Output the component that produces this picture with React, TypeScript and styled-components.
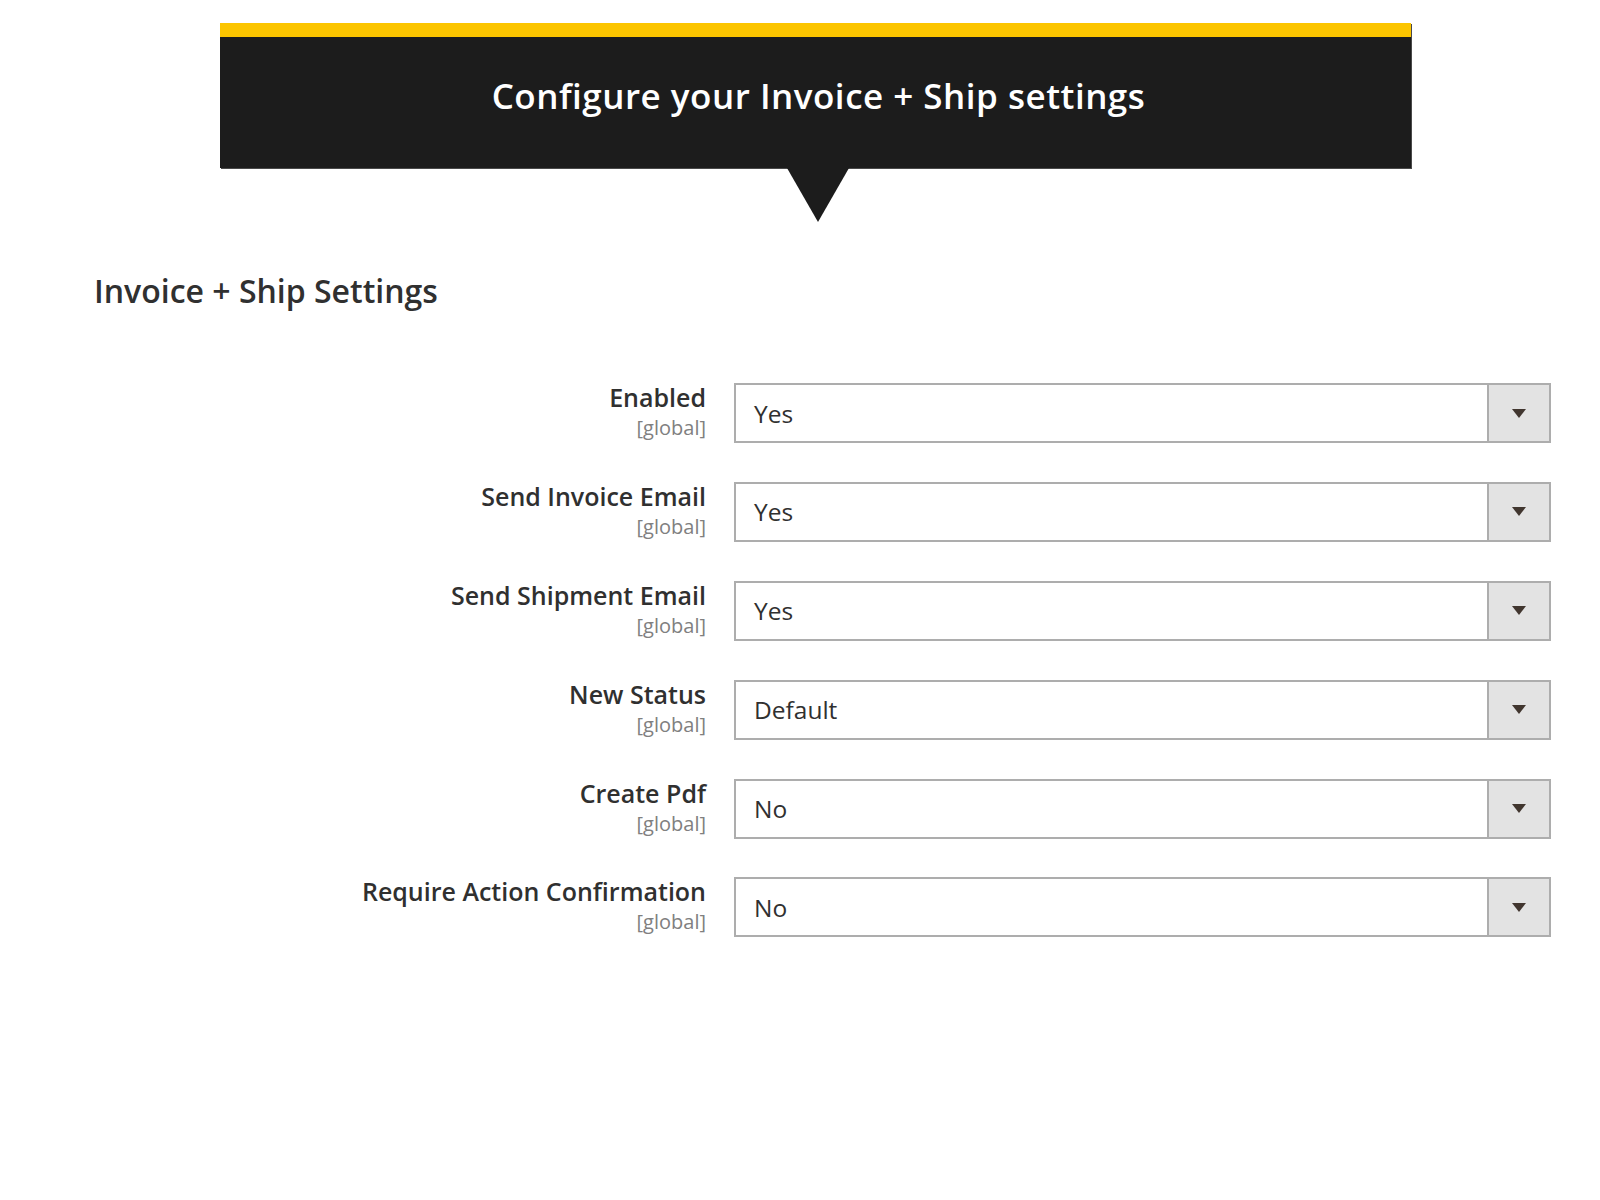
import React from "react";
import styled, { createGlobalStyle } from "styled-components";

const GlobalStyle = createGlobalStyle`
  html, body { margin: 0; padding: 0; background: #ffffff; }
  body { font-family: "Open Sans", "Liberation Sans", sans-serif; color: #303030; }
`;

const Page = styled.div`
  width: 1600px;
  min-height: 1200px;
  padding-top: 23px;
  box-sizing: border-box;
`;

const Banner = styled.div`
  position: relative;
  margin-left: 220px;
  width: 1191px;
  height: 131px;
  box-sizing: content-box;
  border-top: 14px solid #fcc500;
  background: #1c1c1c;
  box-shadow: 1px 1px 0 #4a4a4a;
  display: flex;
  align-items: center;
  justify-content: center;
  &::after {
    content: "";
    position: absolute;
    left: 567px;
    top: 131px;
    width: 0;
    height: 0;
    border-left: 31px solid transparent;
    border-right: 31px solid transparent;
    border-top: 54px solid #1c1c1c;
  }
`;

const BannerTitle = styled.h1`
  margin: 0 0 14px 6px;
  font-family: "Open Sans", "Liberation Sans", sans-serif;
  font-weight: 600;
  font-size: 35px;
  letter-spacing: 0.5px;
  color: #ffffff;
`;

const Heading = styled.h2`
  margin: 104px 0 0 94px;
  font-size: 32px;
  line-height: 38px;
  font-weight: 600;
  color: #303030;
`;

const Form = styled.div`
  margin-top: 73px;
  display: grid;
  grid-template-columns: 706px 817px;
  column-gap: 28px;
  row-gap: 38.9px;
`;

const LabelCell = styled.div`
  display: flex;
  flex-direction: column;
  align-items: flex-end;
  text-align: right;
`;

const LabelText = styled.span`
  font-size: 25px;
  line-height: 29px;
  font-weight: 600;
  color: #303030;
`;

const Scope = styled.span`
  margin-top: 3px;
  font-size: 20px;
  line-height: 26px;
  font-weight: 400;
  color: #808080;
`;

const Select = styled.div`
  height: 60px;
  box-sizing: border-box;
  border: 2px solid #adadad;
  background: #ffffff;
  display: flex;
  align-items: stretch;
`;

const SelectValue = styled.div`
  flex: 1;
  display: flex;
  align-items: center;
  padding-left: 18px;
  font-size: 24.5px;
  color: #303030;
`;

const SelectButton = styled.div`
  width: 60px;
  border-left: 2px solid #adadad;
  background: #e3e3e3;
  display: flex;
  align-items: center;
  justify-content: center;
  &::before {
    content: "";
    width: 0;
    height: 0;
    border-left: 7px solid transparent;
    border-right: 7px solid transparent;
    border-top: 9px solid #41362f;
  }
`;

const rows = [
  { label: "Enabled", value: "Yes" },
  { label: "Send Invoice Email", value: "Yes" },
  { label: "Send Shipment Email", value: "Yes" },
  { label: "New Status", value: "Default" },
  { label: "Create Pdf", value: "No" },
  { label: "Require Action Confirmation", value: "No" },
];

export default function App() {
  return (
    <Page>
      <GlobalStyle />
      <Banner>
        <BannerTitle>Configure your Invoice + Ship settings</BannerTitle>
      </Banner>
      <Heading>Invoice + Ship Settings</Heading>
      <Form>
        {rows.map((r) => (
          <React.Fragment key={r.label}>
            <LabelCell>
              <LabelText>{r.label}</LabelText>
              <Scope>[global]</Scope>
            </LabelCell>
            <Select>
              <SelectValue>{r.value}</SelectValue>
              <SelectButton />
            </Select>
          </React.Fragment>
        ))}
      </Form>
    </Page>
  );
}
